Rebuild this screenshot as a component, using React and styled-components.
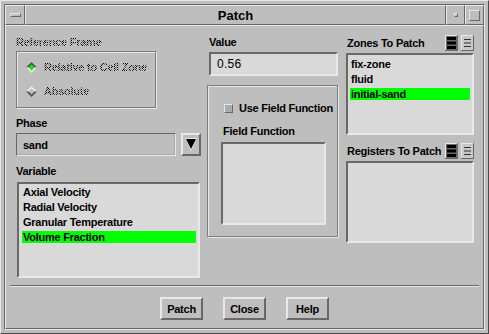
import React from "react";
import styled, { createGlobalStyle, css } from "styled-components";

const BG = "#bebebe";
const FIELD = "#d9d9d9";
const LIGHT = "#e8e8e8";
const DARK = "#686868";

const GlobalStyle = createGlobalStyle`
  html, body {
    margin: 0;
    padding: 0;
    background: ${BG};
  }
  * {
    box-sizing: border-box;
  }
`;

const raised = css`
  border-style: solid;
  border-color: ${LIGHT} ${DARK} ${DARK} ${LIGHT};
`;

const sunken = css`
  border-style: solid;
  border-color: ${DARK} ${LIGHT} ${LIGHT} ${DARK};
`;

const Frame = styled.div`
  width: 489px;
  height: 334px;
  background: ${BG};
  border: 1px solid;
  border-color: ${LIGHT} #4a4a4a #4a4a4a ${LIGHT};
  padding: 3px;
  font-family: "Liberation Sans", Arial, sans-serif;
  font-weight: bold;
  font-size: 11px;
  letter-spacing: -0.25px;
  color: #000;
`;

const FrameInner = styled.div`
  height: 100%;
  border: 1px solid;
  border-color: ${DARK} ${LIGHT} ${LIGHT} ${DARK};
  display: flex;
  flex-direction: column;
`;

const TitleBar = styled.div`
  display: flex;
  height: 20px;
`;

const TitleButton = styled.div`
  ${raised};
  border-width: 1px;
  width: ${({ $w }) => $w || 19}px;
  display: flex;
  align-items: center;
  justify-content: center;
`;

const TitleText = styled.div`
  ${raised};
  border-width: 1px;
  flex: 1;
  display: flex;
  align-items: center;
  justify-content: center;
  font-size: 13px;
  letter-spacing: 0;
`;

const Knob = styled.div`
  ${raised};
  border-width: 1px;
  width: ${({ $w }) => $w}px;
  height: ${({ $h }) => $h}px;
`;

const Client = styled.div`
  flex: 1;
  ${raised};
  border-width: 1px;
  display: flex;
  flex-direction: column;
`;

const Body = styled.div`
  display: grid;
  grid-template-columns: 185px 133px 128px;
  column-gap: 6px;
  padding: 9px 7px 0 10px;
  & > :nth-child(2) {
    margin-right: 2px;
  }
`;

const Column = styled.div`
  display: flex;
  flex-direction: column;
`;

const Label = styled.div`
  height: 14px;
  line-height: 14px;
  margin-top: ${({ $mt }) => $mt || 0}px;
  padding-left: ${({ $pl }) => $pl || 0}px;
  white-space: nowrap;
`;

const Stipple = styled.span`
  background: repeating-conic-gradient(#000 0 25%, transparent 0 50%) 0 0 / 2px 2px;
  -webkit-background-clip: text;
  background-clip: text;
  color: transparent;
`;

const GroupBox = styled.div`
  border: 1px solid #7c7c7c;
  box-shadow: inset 1px 1px 0 ${LIGHT}, 1px 1px 0 ${LIGHT};
  margin-top: ${({ $mt }) => $mt || 0}px;
  width: ${({ $w }) => ($w ? `${$w}px` : "auto")};
  height: ${({ $h }) => $h}px;
  padding: ${({ $pad }) => $pad};
`;

const RadioRow = styled.div`
  height: 24px;
  display: flex;
  align-items: center;
  gap: 7px;
  white-space: nowrap;
`;

const ComboRow = styled.div`
  display: flex;
  gap: 5px;
  margin-top: 3px;
  height: 23px;
`;

const Combo = styled.div`
  flex: 1;
  ${sunken};
  border-width: 1px;
  box-shadow: inset -1px -1px 0 #a8a8a8;
  display: flex;
  align-items: center;
  padding-left: 6px;
`;

const ArrowButton = styled.div`
  width: 20px;
  ${raised};
  border-width: 2px;
  display: flex;
  align-items: center;
  justify-content: center;
`;

const List = styled.div`
  background: ${FIELD};
  ${sunken};
  border-width: 2px;
  height: ${({ $h }) => $h}px;
  margin-top: ${({ $mt }) => $mt || 0}px;
  margin-left: ${({ $ml }) => $ml || 0}px;
  width: ${({ $w }) => ($w ? `${$w}px` : "auto")};
  padding: ${({ $pad }) => $pad || "2px 2px 0 3px"};
`;

const Item = styled.div`
  height: 12px;
  line-height: 12px;
  margin-bottom: 3px;
  padding-left: 1px;
  white-space: nowrap;
  background: ${({ $selected }) => ($selected ? "#00ff00" : "transparent")};
`;

const TextField = styled.div`
  background: ${FIELD};
  ${sunken};
  border-width: 2px;
  height: 24px;
  margin-top: 3px;
  margin-left: 2px;
  display: flex;
  align-items: center;
  padding-left: 6px;
  font-weight: normal;
  font-size: 12px;
  letter-spacing: 0.3px;
`;

const CheckRow = styled.div`
  display: flex;
  align-items: center;
  gap: 6px;
  height: 14px;
  margin-top: 15px;
  padding-left: 16px;
  white-space: nowrap;
`;

const CheckBox = styled.div`
  width: 9px;
  height: 9px;
  background: #adadad;
  ${raised};
  border-width: 1px;
`;

const ListHeader = styled.div`
  display: flex;
  align-items: center;
  height: 16px;
  margin-top: ${({ $mt }) => $mt || 0}px;
  padding-left: 1px;
  gap: 3px;
`;

const HeaderText = styled.div`
  flex: 1;
  white-space: nowrap;
`;

const Separator = styled.div`
  margin: 7px 4px 0 4px;
  height: 2px;
  border-top: 1px solid ${DARK};
  border-bottom: 1px solid ${LIGHT};
`;

const ButtonRow = styled.div`
  display: flex;
  justify-content: center;
  gap: 20px;
  margin-top: 10px;
`;

const Button = styled.div`
  width: 43px;
  height: 23px;
  ${raised};
  border-width: 2px;
  display: flex;
  align-items: center;
  justify-content: center;
`;

const Diamond = ({ selected }) => (
  <svg width="11" height="11" viewBox="0 0 11 11">
    <polygon points="5.5,0 11,5.5 0,5.5" fill={selected ? "#555" : LIGHT} />
    <polygon points="0,5.5 11,5.5 5.5,11" fill={selected ? LIGHT : "#555"} />
    <polygon points="5.5,2.5 8.5,5.5 5.5,8.5 2.5,5.5" fill={selected ? "#00ee00" : "#bdbdbd"} />
  </svg>
);

const DownTriangle = () => (
  <svg width="12" height="13" viewBox="0 0 12 13">
    <polygon points="0,0 12,0 6,13" fill={LIGHT} />
    <polygon points="1,1 11,1 6,11" fill="#000" />
  </svg>
);

const SelectAll = () => (
  <svg width="13" height="16" viewBox="0 0 13 16">
    <rect x="0" y="0" width="13" height="16" fill="#6a6a6a" />
    <rect x="0" y="0" width="12" height="1" fill={LIGHT} />
    <rect x="0" y="0" width="1" height="15" fill={LIGHT} />
    <rect x="2" y="2" width="9" height="3" fill="#000" />
    <rect x="2" y="6.5" width="9" height="3" fill="#000" />
    <rect x="2" y="11" width="9" height="3" fill="#000" />
  </svg>
);

const DeselectAll = () => (
  <svg width="13" height="16" viewBox="0 0 13 16">
    <rect x="0" y="0" width="13" height="16" fill="#c8c8c8" />
    <rect x="0" y="0" width="12" height="1" fill={LIGHT} />
    <rect x="0" y="0" width="1" height="15" fill={LIGHT} />
    <rect x="12" y="0" width="1" height="16" fill={DARK} />
    <rect x="0" y="15" width="13" height="1" fill={DARK} />
    <rect x="3" y="4" width="7" height="1" fill="#333" />
    <rect x="3" y="7.5" width="7" height="1" fill="#333" />
    <rect x="3" y="11" width="7" height="1" fill="#333" />
  </svg>
);

const variables = ["Axial Velocity", "Radial Velocity", "Granular Temperature", "Volume Fraction"];
const zones = ["fix-zone", "fluid", "initial-sand"];

export default function App() {
  return (
    <>
      <GlobalStyle />
      <Frame>
        <FrameInner>
          <TitleBar>
            <TitleButton $w={20}>
              <Knob $w={11} $h={4} />
            </TitleButton>
            <TitleText>Patch</TitleText>
            <TitleButton>
              <Knob $w={4} $h={4} />
            </TitleButton>
            <TitleButton>
              <Knob $w={11} $h={11} />
            </TitleButton>
          </TitleBar>
          <Client>
            <Body>
              <Column>
                <Label>
                  <Stipple>Reference Frame</Stipple>
                </Label>
                <GroupBox $mt={2} $w={140} $h={57} $pad="3px 0 0 9px">
                  <RadioRow>
                    <Diamond selected />
                    <Stipple>Relative to Cell Zone</Stipple>
                  </RadioRow>
                  <RadioRow>
                    <Diamond />
                    <Stipple>Absolute</Stipple>
                  </RadioRow>
                </GroupBox>
                <Label $mt={8}>Phase</Label>
                <ComboRow>
                  <Combo>sand</Combo>
                  <ArrowButton>
                    <DownTriangle />
                  </ArrowButton>
                </ComboRow>
                <Label $mt={8}>Variable</Label>
                <List $mt={4} $ml={1} $w={183} $h={96}>
                  {variables.map((v, i) => (
                    <Item key={v} $selected={i === 3}>
                      {v}
                    </Item>
                  ))}
                </List>
              </Column>
              <Column>
                <Label $pl={2}>Value</Label>
                <TextField>0.56</TextField>
                <GroupBox $mt={9} $h={152} $pad="0">
                  <CheckRow>
                    <CheckBox />
                    Use Field Function
                  </CheckRow>
                  <Label $mt={9} $pl={15}>
                    Field Function
                  </Label>
                  <List $mt={4} $ml={13} $w={105} $h={83} />
                </GroupBox>
              </Column>
              <Column>
                <ListHeader>
                  <HeaderText>Zones To Patch</HeaderText>
                  <SelectAll />
                  <DeselectAll />
                </ListHeader>
                <List $mt={2} $h={82} $pad="3px 2px 0 2px">
                  {zones.map((z, i) => (
                    <Item key={z} $selected={i === 2}>
                      {z}
                    </Item>
                  ))}
                </List>
                <ListHeader $mt={8}>
                  <HeaderText>Registers To Patch</HeaderText>
                  <SelectAll />
                  <DeselectAll />
                </ListHeader>
                <List $mt={2} $h={82} />
              </Column>
            </Body>
            <Separator />
            <ButtonRow>
              <Button>Patch</Button>
              <Button>Close</Button>
              <Button>Help</Button>
            </ButtonRow>
          </Client>
        </FrameInner>
      </Frame>
    </>
  );
}
